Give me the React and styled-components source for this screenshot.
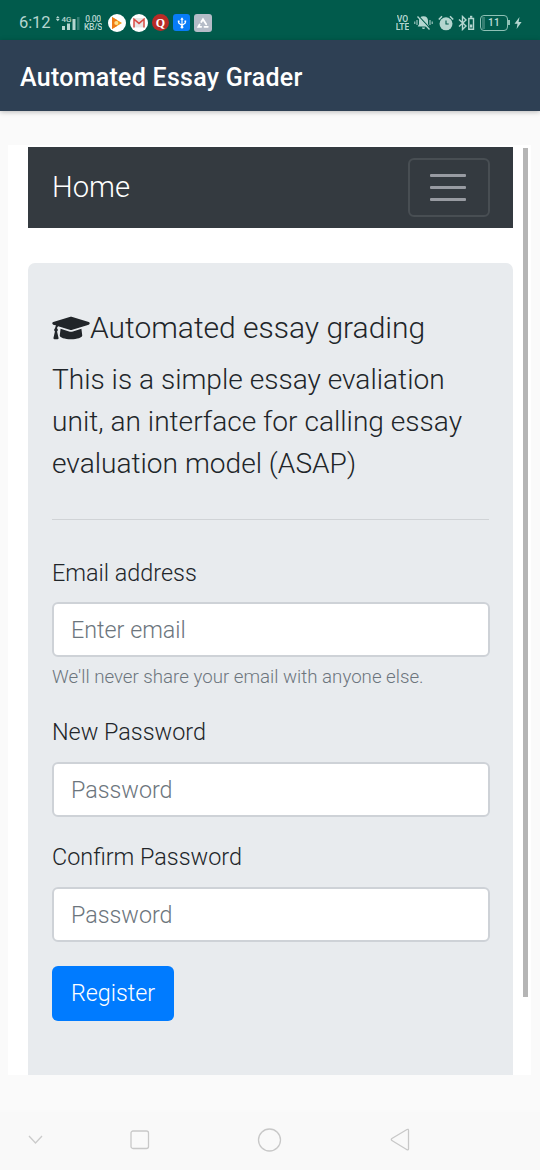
import React from "react";
import styled, { createGlobalStyle } from "styled-components";
import { FaGraduationCap } from "react-icons/fa";

const GlobalStyle = createGlobalStyle`
  *, *::before, *::after { box-sizing: border-box; }
  html, body { margin: 0; background: #fafafa; }
  body { font-family: Roboto, "Liberation Sans", sans-serif; font-weight: 300; color: #212529; overflow: hidden; }
`;

const Screen = styled.div`
  width: 540px;
  height: 1170px;
  display: flex;
  flex-direction: column;
  overflow: hidden;
  background: #fafafa;
`;

const StatusBar = styled.header`
  flex: none;
  height: 40px;
  padding: 5px 18px 0 19px;
  display: flex;
  align-items: center;
  justify-content: space-between;
  background: #015b4c;
  color: #b5d6d0;
`;

const StatusGroup = styled.div`
  display: flex;
  align-items: center;
`;

const Clock = styled.span`
  width: 36px;
  font-size: 16.5px;
  font-weight: 400;
  line-height: 20px;
  letter-spacing: -0.1px;
  white-space: nowrap;
`;

const TinyStack = styled.span`
  display: flex;
  flex-direction: column;
  align-items: center;
  margin-left: ${(p) => p.$gap || 0}px;
  width: ${(p) => p.$width}px;
  font-size: ${(p) => p.$size}px;
  line-height: 8px;
  font-weight: ${(p) => p.$weight || 400};
  letter-spacing: ${(p) => p.$tracking || 0}px;
  white-space: nowrap;
  span { height: 8px; overflow: hidden; }
`;

const Glyph = styled.svg`
  display: block;
  flex: none;
  margin-left: ${(p) => p.$gap || 0}px;
`;

const AppBadge = styled.span`
  flex: none;
  width: ${(p) => p.$size || 18}px;
  height: ${(p) => p.$size || 18}px;
  margin-left: ${(p) => p.$gap}px;
  border-radius: ${(p) => p.$radius || "50%"};
  background: ${(p) => p.$color};
  color: #fff;
  display: flex;
  align-items: center;
  justify-content: center;
  font: 700 12px/16px "Liberation Serif", serif;
`;

const Battery = styled.span`
  position: relative;
  width: 28px;
  height: 16px;
  margin-left: 5px;
  border: 1.5px solid #8fc1b6;
  border-radius: 4px;
  display: flex;
  align-items: center;
  justify-content: center;
  font-size: 10px;
  font-weight: 600;
  line-height: 12px;
  letter-spacing: 0.3px;
  &::before {
    content: "";
    position: absolute;
    left: 1px;
    top: 1px;
    bottom: 1px;
    width: 3px;
    background: #347f72;
  }
  &::after {
    content: "";
    position: absolute;
    right: -3px;
    top: 4px;
    width: 2px;
    height: 5px;
    background: #8fc1b6;
  }
`;

const AppBar = styled.div`
  flex: none;
  height: 71px;
  padding: 0 20px;
  display: flex;
  align-items: center;
  background: #2e4054;
  box-shadow: 0 1px 5px rgba(0, 0, 0, 0.26);
`;

const AppTitle = styled.h1`
  margin: 0;
  padding-top: 4px;
  color: #fff;
  font-size: 25px;
  line-height: 32px;
  font-weight: 500;
  letter-spacing: 0.27px;
  white-space: nowrap;
`;

const WebView = styled.main`
  flex: none;
  margin: 34px 9px 0 8px;
  height: 930px;
  display: flex;
  overflow: hidden;
  background: #fff;
`;

const Page = styled.div`
  width: 485px;
  margin: 2px 0 0 20px;
  display: flex;
  flex-direction: column;
`;

const ScrollThumb = styled.div`
  width: 5px;
  height: 849px;
  margin: 3px 0 0 10px;
  background: #b5b5b5;
`;

const Navbar = styled.nav`
  flex: none;
  height: 81px;
  padding: 0 23px 0 24px;
  display: flex;
  align-items: center;
  justify-content: space-between;
  background: #343a40;
`;

const Brand = styled.span`
  padding-bottom: 2px;
  color: #fff;
  font-size: 29.2px;
  line-height: 44px;
  white-space: nowrap;
`;

const Toggler = styled.button`
  width: 82px;
  height: 59px;
  padding: 0 2px 0 0;
  border: 2px solid #484e53;
  border-radius: 6px;
  background: transparent;
  display: flex;
  flex-direction: column;
  align-items: center;
  justify-content: center;
  gap: 9px;
`;

const TogglerBar = styled.span`
  width: 36px;
  height: 3px;
  border-radius: 1px;
  background: #989ba2;
`;

const Jumbotron = styled.section`
  flex: none;
  height: 850px;
  margin-top: 35px;
  padding: 44px 24px 0;
  border-radius: 7px;
  background: #e8ebee;
`;

const Heading = styled.h2`
  height: 42px;
  margin: 0;
  display: flex;
  align-items: center;
  font-size: 30px;
  line-height: 42px;
  font-weight: 300;
  white-space: nowrap;
  svg { flex: none; width: 38px; height: 30px; margin-bottom: 1px; }
`;

const Lead = styled.p`
  margin: 10px 0 0;
  font-size: 28.1px;
  line-height: 42px;
  white-space: nowrap;
`;

const Divider = styled.hr`
  margin: 34px 0 35px;
  height: 1px;
  border: 0;
  background: #d0d3d6;
`;

const Label = styled.label`
  display: block;
  height: 35px;
  padding-top: 1px;
  margin-bottom: ${(p) => p.$gap || 13}px;
  font-size: 23.4px;
  line-height: 35px;
  white-space: nowrap;
`;

const Field = styled.div`
  margin-bottom: ${(p) => p.$after}px;
`;

const Input = styled.input`
  display: block;
  width: 438px;
  height: 55px;
  padding: 0 17px;
  border: 2px solid #ced2d7;
  border-radius: 6px;
  background: #fff;
  outline: none;
  font: 300 23.3px/35px Roboto, "Liberation Sans", sans-serif;
  &::placeholder { color: #6c757d; opacity: 1; }
`;

const Hint = styled.small`
  display: block;
  margin-top: 6px;
  height: 28px;
  color: #6c757d;
  font-size: 18.7px;
  line-height: 28px;
  white-space: nowrap;
`;

const SubmitButton = styled.button`
  width: 122px;
  height: 55px;
  padding: 0;
  border: 0;
  border-radius: 6px;
  background: #007bff;
  color: #fff;
  font: 300 23.3px/35px Roboto, "Liberation Sans", sans-serif;
`;

const SystemNav = styled.footer`
  flex: none;
  height: 58px;
  margin-top: 37px;
  padding-bottom: 3px;
  background: #f9f9f9;
  display: flex;
  align-items: center;
`;

export default function App() {
  return (
    <Screen>
      <GlobalStyle />
      <StatusBar>
        <StatusGroup>
          <Clock>6:12</Clock>
          <Glyph width="25" height="16" viewBox="0 0 25 16" fill="currentColor">
            <path d="M2.800 1l1.900 2.200H.9zM2.800 6.200L.9 4h3.800z" />
            <text x="6.500" y="6.800" fontSize="8" fontWeight="500">4G</text>
            <path d="M7 11h3v4H7zM12 8.500h3v6.500h-3zM17.500 4h3v11h-3z" />
            <path d="M22 2h2.500v13H22z" opacity=".3" />
          </Glyph>
          <TinyStack $gap={4} $width={18} $size={8.5} $weight={500} $tracking={-0.3}>
            <span>0.00</span>
            <span>KB/S</span>
          </TinyStack>
          <AppBadge $gap={6} $color="#fff">
            <Glyph width="12" height="14" viewBox="0 0 12 14">
              <path d="M1 1l10 6L1 13z" fill="#f59b18" />
              <path d="M1 1l5 3v6l-5 3z" fill="#ef7b16" />
              <circle cx="5.300" cy="7" r="2" fill="#ffe08a" />
            </Glyph>
          </AppBadge>
          <AppBadge $gap={4} $color="#fff">
            <Glyph width="12" height="10" viewBox="0 0 12 10" fill="none">
              <path d="M1 0h10v9.400H1z" fill="#e9e6e6" />
              <path d="M1 9.400V1.200l5 4.200 5-4.200v8.200" stroke="#d94b43" strokeWidth="1.500" />
            </Glyph>
          </AppBadge>
          <AppBadge $gap={4} $color="#b92b27" $size={17}>Q</AppBadge>
          <AppBadge $gap={4} $color="#087cf7" $radius="3px" $size={17}>
            <Glyph width="10" height="12" viewBox="0 0 12 14" fill="none" stroke="#fff" strokeWidth="1.400">
              <path d="M6 2v9M2 5v2l4 3 4-3V5" />
              <path d="M6 0l2 3H4zM1 4h2v2H1zM9 4h2v2H9z" fill="#fff" stroke="none" />
              <circle cx="6" cy="12" r="1.600" fill="#fff" stroke="none" />
            </Glyph>
          </AppBadge>
          <AppBadge $gap={4} $color="#b5bcc8" $radius="3px">
            <Glyph width="14" height="14" viewBox="0 0 14 14" fill="none" stroke="#fff" strokeWidth="1.800" strokeLinecap="round">
              <path d="M5.300 6L7 3.200l3.200 5M3.600 8.500L2.300 10.800h2.900M8.500 10.800h3.300" />
            </Glyph>
          </AppBadge>
        </StatusGroup>
        <StatusGroup>
          <TinyStack $width={15} $size={8.6} $weight={600} $tracking={-0.1}>
            <span>VO</span>
            <span>LTE</span>
          </TinyStack>
          <Glyph $gap={4} width="19" height="16" viewBox="0 0 19 16">
            <path d="M9.500 1.200c-3 0-4.500 2-4.500 4.500v3.500L3.700 11.500h11.600L14 9.200V5.700c0-2.500-1.500-4.500-4.500-4.500zM8 12.500h3a1.500 1.500 0 0 1-3 0z" fill="currentColor" />
            <path d="M3 5v5M.8 6.500v2.500M16 5v5M18.200 6.500v2.500" stroke="currentColor" fill="none" />
            <path d="M4.500 1l12 13" stroke="#015b4c" strokeWidth="1.200" />
            <path d="M3.500 1.500l12 13" stroke="currentColor" strokeWidth="1.300" />
          </Glyph>
          <Glyph $gap={5} width="16" height="16" viewBox="0 0 16 16">
            <circle cx="8" cy="8.800" r="6.500" fill="currentColor" />
            <path d="M.8 4.500L4 1.300M15.200 4.500L12 1.300" stroke="currentColor" strokeWidth="1.600" />
            <path d="M8 5.500v3.500h2.700" stroke="#015b4c" strokeWidth="1.100" fill="none" />
          </Glyph>
          <Glyph $gap={4} width="17" height="16" viewBox="0 0 17 16" fill="none" stroke="currentColor" strokeWidth="1.400">
            <path d="M1 4.500l7 6.500-3.500 3.500v-13L8 5l-7 6.500" />
            <path d="M10.800 3.500h4.700v10.800h-4.700z" />
            <path d="M12 1.800h2.300" strokeWidth="2" />
            <path d="M12 9.500h2.300v3H12z" fill="currentColor" stroke="none" />
          </Glyph>
          <Battery>11</Battery>
          <Glyph $gap={6} width="8" height="12" viewBox="0 0 8 12">
            <path d="M5.500 0L.5 6.800h3L2.600 12l5-7h-3z" fill="currentColor" />
          </Glyph>
        </StatusGroup>
      </StatusBar>
      <AppBar>
        <AppTitle>Automated Essay Grader</AppTitle>
      </AppBar>
      <WebView>
        <Page>
          <Navbar>
            <Brand>Home</Brand>
            <Toggler aria-label="Toggle navigation">
              <TogglerBar />
              <TogglerBar />
              <TogglerBar />
            </Toggler>
          </Navbar>
          <Jumbotron>
            <Heading>
              <FaGraduationCap />
              Automated essay grading
            </Heading>
            <Lead>
              This is a simple essay evaliation
              <br />
              unit, an interface for calling essay
              <br />
              evaluation model (ASAP)
            </Lead>
            <Divider />
            <Field $after={23}>
              <Label htmlFor="email" $gap={12}>Email address</Label>
              <Input id="email" placeholder="Enter email" />
              <Hint>We'll never share your email with anyone else.</Hint>
            </Field>
            <Field $after={22}>
              <Label htmlFor="new-password">New Password</Label>
              <Input id="new-password" type="password" placeholder="Password" />
            </Field>
            <Field $after={24}>
              <Label htmlFor="confirm-password">Confirm Password</Label>
              <Input id="confirm-password" type="password" placeholder="Password" />
            </Field>
            <SubmitButton>Register</SubmitButton>
          </Jumbotron>
        </Page>
        <ScrollThumb />
      </WebView>
      <SystemNav>
        <Glyph $gap={28} width="15" height="10" viewBox="0 0 15 10" fill="none" stroke="#cbcbcb" strokeWidth="1.300">
          <path d="M1 1l6.500 7L14 1" />
        </Glyph>
        <Glyph $gap={87} width="20" height="20" viewBox="0 0 20 20" fill="none" stroke="#c8c8c8" strokeWidth="1.300">
          <rect x="1" y="1" width="17.500" height="17.500" rx="2" />
        </Glyph>
        <Glyph $gap={107} width="25" height="24" viewBox="0 0 25 24" fill="none" stroke="#c8c8c8" strokeWidth="1.300">
          <circle cx="12.500" cy="12" r="11" />
        </Glyph>
        <Glyph $gap={108} width="21" height="24" viewBox="0 0 21 24" fill="none" stroke="#c8c8c8" strokeWidth="1.300">
          <path d="M17 1.500L2.300 10.300q-2 1.200 0 2.400L17 21.700q1.500.7 1.500-1V2.500q0-1.700-1.500-1z" />
        </Glyph>
      </SystemNav>
    </Screen>
  );
}
